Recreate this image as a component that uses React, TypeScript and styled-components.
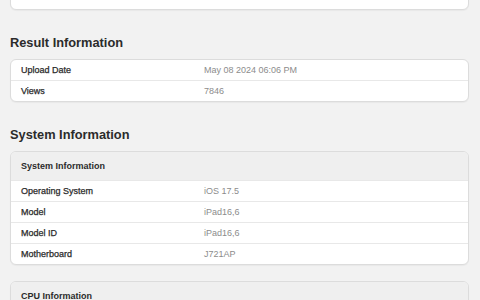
import React from "react";
import styled, { createGlobalStyle } from "styled-components";

const GlobalStyle = createGlobalStyle`
  html, body {
    margin: 0;
    padding: 0;
    background: #f2f2f2;
    overflow: hidden;
  }
  body {
    font-family: "Liberation Sans", Arial, Helvetica, sans-serif;
    -webkit-font-smoothing: antialiased;
  }
`;

const Page = styled.div`
  width: 480px;
  height: 300px;
  overflow: hidden;
  box-sizing: border-box;
  padding: 0 11px 0 10px;
  display: flex;
  flex-direction: column;
`;

const Card = styled.div`
  background: #ffffff;
  border: 1px solid #dcdcdc;
  border-radius: 6px;
  box-shadow: 0 1px 1px rgba(0, 0, 0, 0.04);
  overflow: hidden;
  flex-shrink: 0;
`;

const TopCard = styled(Card)`
  margin-top: -30px;
  height: 40px;
  box-sizing: border-box;
`;

const SectionTitle = styled.h2`
  margin: 25px 0 9px;
  font-size: 12.8px;
  line-height: 15px;
  font-weight: 700;
  color: #2b2b2b;
`;

const CardHeader = styled.div`
  height: 28px;
  display: flex;
  align-items: center;
  padding-left: 10px;
  background: #efefef;
  border-bottom: 1px solid #e8e8e8;
  font-size: 9px;
  font-weight: 700;
  color: #2b2b2b;
`;

const Row = styled.div`
  display: grid;
  grid-template-columns: 193px 1fr;
  height: 20px;
  align-items: center;
  border-bottom: 1px solid #e8e8e8;
  font-size: 9px;

  &:last-child {
    border-bottom: none;
  }
`;

const Label = styled.span`
  padding-left: 10px;
  color: #2a2a2a;
  -webkit-text-stroke: 0.25px #2a2a2a;
`;

const Value = styled.span`
  color: #8c8c8c;
`;

const SpacedCard = styled(Card)`
  margin-top: 16px;
  height: 40px;
`;

type Item = [string, string];

const resultRows: Item[] = [
  ["Upload Date", "May 08 2024 06:06 PM"],
  ["Views", "7846"],
];

const systemRows: Item[] = [
  ["Operating System", "iOS 17.5"],
  ["Model", "iPad16,6"],
  ["Model ID", "iPad16,6"],
  ["Motherboard", "J721AP"],
];

const Rows = ({ items }: { items: Item[] }) => (
  <>
    {items.map(([k, v]) => (
      <Row key={k}>
        <Label>{k}</Label>
        <Value>{v}</Value>
      </Row>
    ))}
  </>
);

export default function App() {
  return (
    <>
      <GlobalStyle />
      <Page>
        <TopCard />
        <SectionTitle>Result Information</SectionTitle>
        <Card>
          <Rows items={resultRows} />
        </Card>
        <SectionTitle>System Information</SectionTitle>
        <Card>
          <CardHeader>System Information</CardHeader>
          <Rows items={systemRows} />
        </Card>
        <SpacedCard>
          <CardHeader>CPU Information</CardHeader>
        </SpacedCard>
      </Page>
    </>
  );
}
